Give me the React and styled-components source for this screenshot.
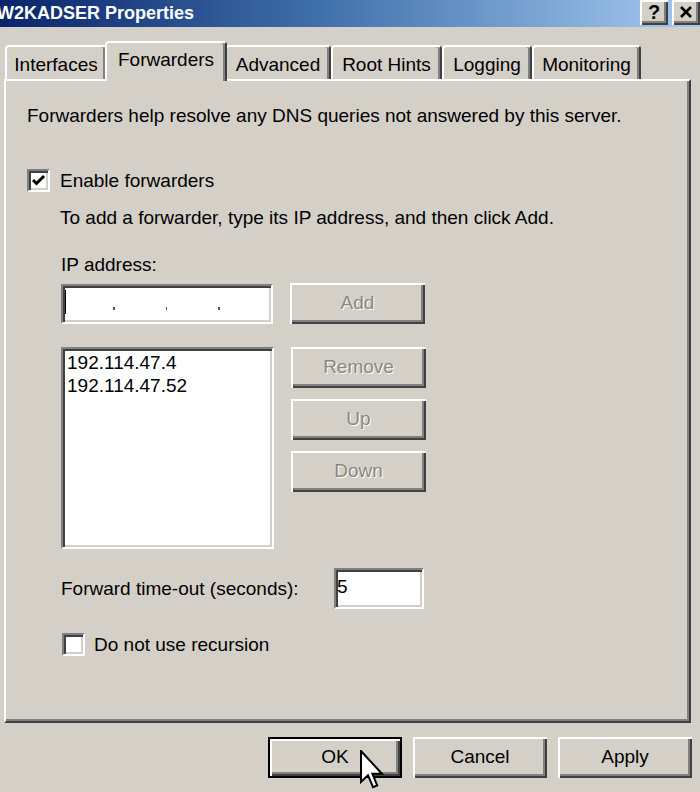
import React from 'react'
import styled, { createGlobalStyle } from 'styled-components'

const GlobalStyle = createGlobalStyle`
  html, body {
    margin: 0;
    padding: 0;
    background: #d4d0c8;
  }
  body {
    font-family: "Liberation Sans", Arial, sans-serif;
    font-size: 19px;
    color: #000;
  }
`

const raised = `
  box-shadow: inset 2px 2px 0 #fff, inset -2px -2px 0 #404040, inset -4px -4px 0 #808080;
`

const sunken = `
  background: #fff;
  border: 2px solid;
  border-color: #808080 #fff #fff #808080;
  box-shadow: inset 2px 2px 0 #404040, inset -2px -2px 0 #d4d0c8;
  box-sizing: border-box;
`

const Window = styled.div`
  position: relative;
  width: 700px;
  height: 792px;
  overflow: hidden;
  background: #d4d0c8;
  display: flex;
  flex-direction: column;
`

const TitleBar = styled.div`
  height: 27px;
  flex: none;
  display: flex;
  justify-content: space-between;
  align-items: center;
  background: linear-gradient(90deg, #0a246a 0%, #3f6faa 45%, #a6caf0 100%);
`

const Title = styled.span`
  margin-left: -3px;
  color: #fff;
  font-weight: bold;
  font-size: 18px;
  white-space: nowrap;
`

const Captions = styled.div`
  display: flex;
  gap: 4px;
  align-self: flex-start;
`

const CaptionButton = styled.div`
  width: 28px;
  height: 25px;
  background: #d4d0c8;
  ${raised}
  display: flex;
  align-items: center;
  justify-content: center;
  font-weight: bold;
  font-size: 20px;
  line-height: 1;
  padding-bottom: 2px;
  box-sizing: border-box;
`

const TabStrip = styled.div`
  display: flex;
  align-items: flex-end;
  height: 40px;
  margin-top: 14px;
  padding-left: 5px;
  flex: none;
`

const Tab = styled.div`
  position: relative;
  z-index: ${p => (p.$active ? 2 : 1)};
  width: ${p => p.$width}px;
  height: ${p => (p.$active ? 40 : 34)}px;
  margin: ${p => (p.$active ? '0 -2px' : '0 0 2px')};
  box-sizing: border-box;
  background: #d4d0c8;
  border: 2px solid;
  border-bottom: none;
  border-color: #fff #404040 transparent #fff;
  border-radius: 4px 4px 0 0;
  box-shadow: inset -2px 0 0 #808080;
  padding-top: ${p => (p.$active ? 5 : 6)}px;
  line-height: 23px;
  text-align: center;
  white-space: nowrap;
`

const Panel = styled.div`
  margin: -2px 0 0 4px;
  width: 687px;
  height: 644px;
  box-sizing: border-box;
  border: 2px solid;
  border-color: #fff #404040 #404040 #fff;
  box-shadow: inset -2px -2px 0 #808080;
  padding: 23px 0 0 21px;
  display: flex;
  flex-direction: column;
  flex: none;
`

const Text = styled.p`
  margin: ${p => p.$top || 0}px 0 0 ${p => p.$left || 0}px;
  line-height: 23px;
  white-space: nowrap;
`

const CheckRow = styled.label`
  display: flex;
  align-items: center;
  gap: ${p => p.$gap || 10}px;
  margin: ${p => p.$top}px 0 0 ${p => p.$left || 0}px;
  line-height: 23px;
`

const CheckBox = styled.span`
  ${sunken}
  width: 23px;
  height: 23px;
  flex: none;
  display: flex;
  align-items: center;
  justify-content: center;
`

const Indent = styled.div`
  margin-left: 34px;
  display: flex;
  flex-direction: column;
`

const Row = styled.div`
  display: flex;
  align-items: ${p => p.$align || 'center'};
  gap: 17px;
  margin-top: ${p => p.$top}px;
`

const IpField = styled.div`
  ${sunken}
  width: 212px;
  height: 40px;
  display: flex;
  align-items: center;
  padding-left: 2px;
`

const Caret = styled.span`
  width: 2px;
  height: 24px;
  background: #000;
  margin-right: 47px;
  margin-top: -4px;
`

const Dot = styled.span`
  width: 3px;
  height: 3px;
  background: #555;
  margin: 10px 51px 0 0;
`

const ListBox = styled.div`
  ${sunken}
  width: 213px;
  height: 202px;
  padding: 2px 0 0 4px;
  line-height: 23px;
`

const ButtonColumn = styled.div`
  display: flex;
  flex-direction: column;
  gap: 11px;
`

const Button = styled.div`
  width: ${p => p.$width || 135}px;
  height: 41px;
  box-sizing: border-box;
  background: #d4d0c8;
  display: flex;
  align-items: center;
  justify-content: center;
  padding-bottom: 2px;
  color: ${p => (p.$disabled ? '#8a8780' : '#000')};
  text-shadow: ${p => (p.$disabled ? '1px 1px 0 #fff' : 'none')};
  ${p =>
    p.$default
      ? `border: 2px solid #000; box-shadow: inset 2px 2px 0 #fff, inset -2px -2px 0 #404040, inset -4px -4px 0 #808080;`
      : raised}
`

const TimeoutLabel = styled.span`
  width: 273px;
  flex: none;
`

const TimeoutField = styled.div`
  ${sunken}
  width: 90px;
  height: 41px;
  flex: none;
  padding: 5px 0 0 1px;
  line-height: 23px;
  margin-left: -17px;
`

const Footer = styled.div`
  display: flex;
  justify-content: flex-end;
  gap: 11px;
  padding-right: 8px;
  margin-top: 14px;
`

const Pointer = styled.svg`
  position: absolute;
  left: 360px;
  top: 750px;
  z-index: 5;
`

const tabs = [
  { label: 'Interfaces', width: 102 },
  { label: 'Forwarders', width: 122, active: true },
  { label: 'Advanced', width: 106 },
  { label: 'Root Hints', width: 111 },
  { label: 'Logging', width: 90 },
  { label: 'Monitoring', width: 109 },
]

const forwarders = ['192.114.47.4', '192.114.47.52']

const Check = () => (
  <svg width="15" height="15" viewBox="0 0 15 15">
    <polyline points="2,7 5.5,10.5 13,3" fill="none" stroke="#000" strokeWidth="3" />
  </svg>
)

const App = () => (
  <Window>
    <GlobalStyle />
    <TitleBar>
      <Title>W2KADSER Properties</Title>
      <Captions>
        <CaptionButton>?</CaptionButton>
        <CaptionButton>
          <svg width="14" height="12" viewBox="0 0 14 12">
            <path d="M2 1 L12 11 M12 1 L2 11" stroke="#000" strokeWidth="2.6" />
          </svg>
        </CaptionButton>
      </Captions>
    </TitleBar>

    <TabStrip>
      {tabs.map(t => (
        <Tab key={t.label} $width={t.width} $active={t.active}>
          {t.label}
        </Tab>
      ))}
    </TabStrip>

    <Panel>
      <Text>Forwarders help resolve any DNS queries not answered by this server.</Text>
      <CheckRow $top={42}>
        <CheckBox>
          <Check />
        </CheckBox>
        Enable forwarders
      </CheckRow>
      <Indent>
        <Text $top={14} $left={-1}>
          To add a forwarder, type its IP address, and then click Add.
        </Text>
        <Text $top={24}>IP address:</Text>
        <Row $top={7}>
          <IpField>
            <Caret />
            <Dot />
            <Dot />
            <Dot />
          </IpField>
          <Button $disabled>Add</Button>
        </Row>
        <Row $top={23} $align="flex-start">
          <ListBox>
            {forwarders.map(ip => (
              <div key={ip}>{ip}</div>
            ))}
          </ListBox>
          <ButtonColumn>
            <Button $disabled>Remove</Button>
            <Button $disabled>Up</Button>
            <Button $disabled>Down</Button>
          </ButtonColumn>
        </Row>
        <Row $top={19}>
          <TimeoutLabel>Forward time-out (seconds):</TimeoutLabel>
          <TimeoutField>5</TimeoutField>
        </Row>
        <CheckRow $top={24} $left={1} $gap={9}>
          <CheckBox />
          Do not use recursion
        </CheckRow>
      </Indent>
    </Panel>

    <Footer>
      <Button $width={134} $default>OK</Button>
      <Button $width={134}>Cancel</Button>
      <Button $width={134}>Apply</Button>
    </Footer>

    <Pointer width="26" height="40" viewBox="0 0 13 20">
      <path
        d="M0.5 0.5 L0.5 16 L4 12.6 L6.5 18.6 L8.6 17.7 L6.2 11.9 L11 11.9 Z"
        fill="#fff"
        stroke="#000"
        strokeWidth="1"
        strokeLinejoin="miter"
      />
    </Pointer>
  </Window>
)

export default App
